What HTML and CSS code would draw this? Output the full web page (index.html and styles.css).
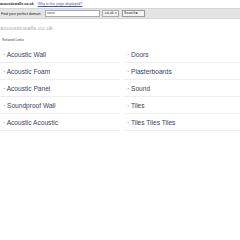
FILE: index.html
```html
<!DOCTYPE html>
<html>
<head>
<meta charset="utf-8">
<link rel="stylesheet" href="styles.css">
</head>
<body>
<div class="top">
  <span class="domain">acousticwalls.co.uk</span>
  <a class="why" href="#">Why is this page displayed?</a>
</div>
<div class="bar">
  <span class="label">Find your perfect domain</span>
  <span class="input">www</span>
  <span class="select">.co.uk <span class="arr">&#9662;</span></span>
  <span class="btn">Search &#9656;</span>
</div>
<div class="title">acousticwalls.co.uk</div>
<div class="related">Related Links</div>
<div class="links">
  <a class="link" href="#">· Acoustic Wall</a>
  <a class="link" href="#">· Doors</a>
  <a class="link" href="#">· Acoustic Foam</a>
  <a class="link" href="#">· Plasterboards</a>
  <a class="link" href="#">· Acoustic Panel</a>
  <a class="link" href="#">· Sound</a>
  <a class="link" href="#">· Soundproof Wall</a>
  <a class="link" href="#">· Tiles</a>
  <a class="link" href="#">· Acoustic Acoustic</a>
  <a class="link" href="#">· Tiles Tiles Tiles</a>
</div>
</body>
</html>
```
FILE: styles.css
```css
html, body {
  margin: 0;
  padding: 0;
  background: #fff;
  font-family: "Liberation Sans", Arial, sans-serif;
}
.top {
  height: 8px;
  display: flex;
  align-items: center;
  gap: 4px;
  font-size: 3.6px;
}
.domain {
  font-weight: bold;
  color: #222;
}
.why {
  color: #4455aa;
  text-decoration: underline;
}
.bar {
  height: 9px;
  background: #e4e4e4;
  border-top: 1px solid #d6d6d6;
  border-bottom: 1px solid #d6d6d6;
  display: flex;
  align-items: center;
  font-size: 3.6px;
  color: #222;
}
.label {
  width: 44px;
  padding-left: 1px;
}
.input {
  width: 52px;
  height: 5px;
  background: #fff;
  border: 1px solid #aaa;
  color: #555;
  line-height: 5px;
  padding-left: 1px;
}
.select {
  margin-left: 2px;
  width: 14px;
  height: 5px;
  line-height: 5px;
  background: #f2f2f2;
  border: 1px solid #aaa;
  padding-left: 1px;
}
.arr { font-size: 3px; }
.btn {
  margin-left: 3px;
  width: 20px;
  height: 5px;
  line-height: 5px;
  background: #f4f4f4;
  border: 1px solid #999;
  padding-left: 1px;
}
.title {
  margin-top: 4px;
  font-size: 6.2px;
  color: #b0b0b0;
  height: 9px;
  line-height: 9px;
}
.related {
  margin-top: 5px;
  font-size: 3.6px;
  color: #444;
  padding-left: 2px;
  height: 9px;
  line-height: 6px;
}
.links {
  display: grid;
  grid-template-columns: 120px 120px;
  column-gap: 4px;
}
.link {
  display: block;
  height: 17px;
  line-height: 17px;
  border-bottom: 1px solid #eee;
  box-sizing: border-box;
  font-size: 6.6px;
  color: #3a3f68;
  text-decoration: none;
  padding-left: 3px;
}
```
